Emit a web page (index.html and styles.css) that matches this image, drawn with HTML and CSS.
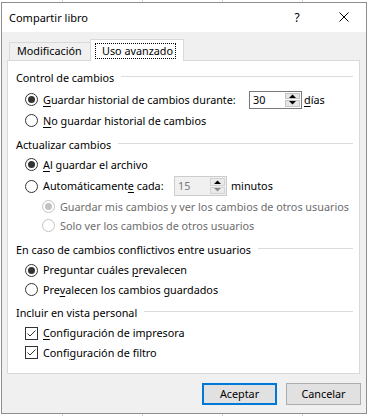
FILE: index.html
```html
<!DOCTYPE html>
<html lang="es">
<head>
<meta charset="utf-8">
<title>Compartir libro</title>
<link rel="stylesheet" href="styles.css">
</head>
<body>
<div class="sheet">
  <div class="dialog">
    <div class="titlebar">
      <span class="title">Compartir libro</span>
      <span class="tb-btn help">?</span>
      <span class="tb-btn close">
        <svg width="10" height="10" viewBox="0 0 10 10"><path d="M0.5 0.5L9.5 9.5M9.5 0.5L0.5 9.5" stroke="#000" stroke-width="1" fill="none"/></svg>
      </span>
    </div>
    <div class="body">
      <div class="tabs">
        <div class="tab">Modificación</div>
        <div class="tab active"><span class="focus">Uso avanzado</span></div>
      </div>
      <div class="panel">
        <div class="group-head"><span>Control de cambios</span><span class="rule"></span></div>
        <div class="row h21 mt4">
          <span class="radio checked"></span>
          <span class="label w-dur"><u>G</u>uardar historial de cambios durante:</span>
          <span class="spin">
            <span class="spin-val">30</span>
            <span class="spin-btns">
              <span class="sb"><svg width="7" height="4" viewBox="0 0 7 4"><path d="M0 4L3.5 0.5L7 4Z" fill="#000"/></svg></span>
              <span class="sb"><svg width="7" height="4" viewBox="0 0 7 4"><path d="M0 0L3.5 3.5L7 0Z" fill="#000"/></svg></span>
            </span>
          </span>
          <span class="after"><u>d</u>ías</span>
        </div>
        <div class="row h21">
          <span class="radio"></span>
          <span class="label"><u>N</u>o guardar historial de cambios</span>
        </div>

        <div class="group-head mt5"><span>Actualizar cambios</span><span class="rule"></span></div>
        <div class="row h21 mt2">
          <span class="radio checked"></span>
          <span class="label"><u>A</u>l guardar el archivo</span>
        </div>
        <div class="row h22">
          <span class="radio"></span>
          <span class="label w-auto">Automáticament<u>e</u> cada:</span>
          <span class="spin disabled tall">
            <span class="spin-val">15</span>
            <span class="spin-btns">
              <span class="sb"><svg width="7" height="4" viewBox="0 0 7 4"><path d="M0 4L3.5 0.5L7 4Z" fill="#000"/></svg></span>
              <span class="sb"><svg width="7" height="4" viewBox="0 0 7 4"><path d="M0 0L3.5 3.5L7 0Z" fill="#8a8a8a"/></svg></span>
            </span>
          </span>
          <span class="after mins">minutos</span>
        </div>
        <div class="row h19 sub">
          <span class="radio checked disabled"></span>
          <span class="label muted">Guardar mis cambios y ver los cambios de otros usuarios</span>
        </div>
        <div class="row h19 sub">
          <span class="radio disabled"></span>
          <span class="label muted">Solo ver los cambios de otros usuarios</span>
        </div>

        <div class="group-head mt6"><span>En caso de cambios conflictivos entre usuarios</span><span class="rule"></span></div>
        <div class="row h20 mt3">
          <span class="radio checked"></span>
          <span class="label">Preguntar cuáles <u>p</u>revalecen</span>
        </div>
        <div class="row h19">
          <span class="radio"></span>
          <span class="label">Pre<u>v</u>alecen los cambios guardados</span>
        </div>

        <div class="group-head mt5"><span>Incluir en vista personal</span><span class="rule"></span></div>
        <div class="row h20 mt3">
          <span class="check"><svg width="11" height="11" viewBox="0 0 11 11"><path d="M1.5 5.5L4 8L9.5 2.5" stroke="#333" stroke-width="1" fill="none"/></svg></span>
          <span class="label"><u>C</u>onfiguración de impresora</span>
        </div>
        <div class="row h19">
          <span class="check"><svg width="11" height="11" viewBox="0 0 11 11"><path d="M1.5 5.5L4 8L9.5 2.5" stroke="#333" stroke-width="1" fill="none"/></svg></span>
          <span class="label">Confi<u>g</u>uración de filtro</span>
        </div>
      </div>
      <div class="buttons">
        <button class="btn default">Aceptar</button>
        <button class="btn">Cancelar</button>
      </div>
    </div>
  </div>
</div>
</body>
</html>
```

FILE: styles.css
```css
* { box-sizing: border-box; }
html, body { margin: 0; padding: 0; }
body {
  width: 368px;
  height: 416px;
  overflow: hidden;
  background-color: #ffffff;
  background-image: linear-gradient(to right, #d4d4d4 1px, transparent 1px);
  background-size: 80px 100%;
  background-position: 62px 0;
  font-family: "Noto Sans", "DejaVu Sans", sans-serif;
  font-size: 10.8px;
  color: #000;
}
.sheet { padding: 2px 1px 0 1px; }
.dialog {
  width: 366px;
  height: 412px;
  border: 1px solid #8e8e8e;
  background: #f0f0f0;
  display: flex;
  flex-direction: column;
}
.titlebar {
  height: 29px;
  background: #fff;
  display: flex;
  align-items: center;
  padding-left: 7px;
}
.title { font-size: 11px; flex: 1; padding-bottom: 1px; }
.tb-btn {
  width: 46px;
  height: 29px;
  display: flex;
  align-items: center;
  justify-content: center;
}
.help { font-size: 12px; padding-bottom: 1px; }
.close { padding-left: 2px; padding-bottom: 1px; }

.body {
  flex: 1;
  display: flex;
  flex-direction: column;
  padding: 0 6px 0 5px;
}
.tabs {
  height: 28px;
  display: flex;
  align-items: flex-end;
  padding-left: 2px;
  position: relative;
  z-index: 1;
}
.tab {
  height: 18px;
  width: 82px;
  border: 1px solid #d9d9d9;
  border-bottom: none;
  background: #f0f0f0;
  padding-left: 7px;
  line-height: 16px;
}
.tab.active {
  height: 22px;
  width: 94px;
  margin-left: -1px;
  margin-bottom: -1px;
  background: #fff;
  padding: 3px 0 0 4px;
}
.focus {
  display: block;
  width: 81px;
  height: 16px;
  border: 1px dotted #000;
  padding-left: 6px;
  line-height: 13px;
}
.panel {
  height: 314px;
  border: 1px solid #d9d9d9;
  background: #fff;
  padding: 8px 6px 11px 8px;
  display: flex;
  flex-direction: column;
}
.group-head {
  height: 16px;
  display: flex;
  align-items: center;
  flex-shrink: 0;
}
.rule {
  flex: 1;
  height: 1px;
  background: #dcdcdc;
  margin-left: 7px;
  margin-top: -1px;
}
.mt2 { margin-top: 2px; }
.mt3 { margin-top: 3px; }
.mt4 { margin-top: 4px; }
.mt5 { margin-top: 5px; }
.mt6 { margin-top: 6px; }
.row {
  display: flex;
  align-items: center;
  padding-left: 9px;
  flex-shrink: 0;
}
.row.sub { padding-left: 26px; }
.h19 { height: 19px; }
.h20 { height: 20px; }
.h21 { height: 21px; }
.h22 { height: 22px; }
.radio {
  width: 13px;
  height: 13px;
  border: 1px solid #333;
  border-radius: 50%;
  background: #fff;
  display: flex;
  align-items: center;
  justify-content: center;
  flex-shrink: 0;
  margin-right: 5px;
}
.radio.checked::after {
  content: "";
  width: 7px;
  height: 7px;
  border-radius: 50%;
  background: #333;
}
.radio.disabled { border-color: #c2c2c2; }
.radio.disabled.checked::after { background: #c2c2c2; }
.check {
  width: 13px;
  height: 13px;
  border: 1px solid #333;
  background: #fff;
  display: flex;
  flex-shrink: 0;
  margin-right: 5px;
}
.check svg { display: block; }
.label { white-space: nowrap; padding-bottom: 1px; }
.label u, .after u { text-decoration-thickness: 1px; text-underline-offset: 2px; }
.muted { color: #6d6d6d; }
.w-dur { width: 206px; }
.w-auto { width: 131px; }
.spin {
  width: 53px;
  height: 18px;
  border: 1px solid #7a7a7a;
  background: #fff;
  display: flex;
  align-items: stretch;
  flex-shrink: 0;
}
.spin.tall { height: 20px; }
.spin-val { flex: 1; padding-left: 3px; display: flex; align-items: center; padding-bottom: 1px; }
.spin-btns {
  width: 15px;
  display: flex;
  flex-direction: column;
  gap: 1px;
  margin: 1px 1px 1px 0;
}
.sb {
  flex: 1;
  background: #e6e6e6;
  border: 1px solid #c4c4c4;
  display: flex;
  align-items: center;
  justify-content: center;
}
.sb svg { display: block; }
.spin.disabled { border-color: #cccccc; background: #f0f0f0; }
.spin.disabled .spin-val { color: #7a7a7a; }
.spin.disabled .sb { background: #eaeaea; border-color: #d2d2d2; }
.after { margin-left: 2px; padding-bottom: 1px; }
.after.mins { margin-left: 4px; }
.buttons {
  display: flex;
  justify-content: flex-end;
  gap: 9px;
  margin-top: 9px;
  margin-right: -1px;
}
.btn {
  width: 75px;
  height: 22px;
  border: 1px solid #adadad;
  background: #e1e1e1;
  font-family: "Noto Sans", "DejaVu Sans", sans-serif;
  font-size: 10.8px;
  color: #000;
  padding: 0 0 1px 0;
  margin: 0;
}
.btn.default { border: 2px solid #0078d7; }
```
